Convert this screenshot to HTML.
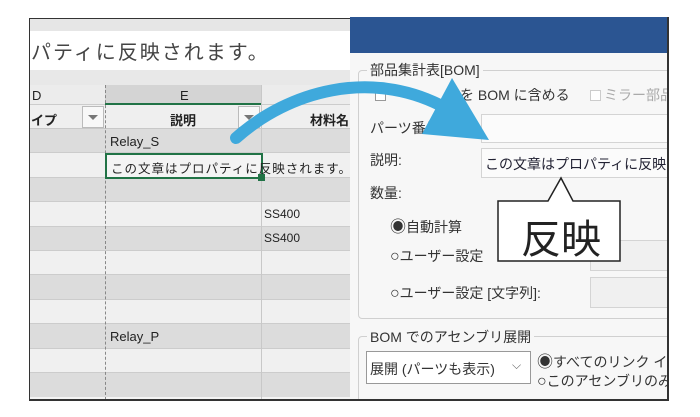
<!DOCTYPE html>
<html><head><meta charset="utf-8"><style>
*{margin:0;padding:0;box-sizing:border-box}
body{width:700px;height:417px;background:#fff;position:relative;overflow:hidden;font-family:"Liberation Sans","Noto Sans CJK JP",sans-serif;color:#222}
.a{position:absolute}
.t{font-size:13px;white-space:nowrap}
#dlg{position:absolute;left:350px;top:17px;width:318px;height:383px;overflow:hidden;background:#f7f7f7}
#dlg .a{margin-left:-350px;margin-top:-17px}
</style></head><body>
<!-- frame -->
<div class="a" style="left:29px;top:18px;width:640px;height:383px;border:1.5px solid #333;background:#f4f4f4"></div>
<!-- excel -->
<div class="a" style="left:30px;top:19px;width:320px;height:12px;background:#e6e6e6"></div>
<div class="a" style="left:30px;top:31px;width:320px;height:39px;background:#fff"></div>
<div class="a t" style="left:31px;top:36px;font-size:20px;color:#444;letter-spacing:2px">パティに反映されます。</div>
<div class="a" style="left:30px;top:70px;width:320px;height:15px;background:#e8e8e8"></div>
<div class="a" style="left:30px;top:85px;width:320px;height:20px;background:#ececec;border-bottom:1px solid #ccc"></div>
<div class="a" style="left:105px;top:85px;width:156px;height:20px;background:#d4d4d4;border-bottom:2px solid #217346"></div>
<div class="a t" style="left:32px;top:88px">D</div>
<div class="a t" style="left:180px;top:88px">E</div>
<div class="a" style="left:30px;top:105px;width:320px;height:24px;background:#efefef;border-bottom:1px solid #c8c8c8"></div>
<div class="a t" style="left:31px;top:110px;font-weight:bold">イプ</div>
<div class="a" style="left:82px;top:106px;width:22px;height:22px;border:1px solid #bbb;background:#f8f8f8"></div>
<div class="a" style="left:88px;top:115px;border:5px solid transparent;border-top:5px solid #777"></div>
<div class="a t" style="left:170px;top:110px;font-weight:bold">説明</div>
<div class="a" style="left:238px;top:106px;width:22px;height:22px;border:1px solid #bbb;background:#f8f8f8"></div>
<div class="a" style="left:244px;top:115px;border:5px solid transparent;border-top:5px solid #777"></div>
<div class="a t" style="left:310px;top:110px;font-weight:bold">材料名</div>
<!-- rows -->
<div class="a" style="left:30px;top:129px;width:320px">
<div style="height:24.4px;background:#dcdcdc;border-bottom:1px solid #ccc"></div>
<div style="height:24.4px;background:#f0f0f0;border-bottom:1px solid #ccc"></div>
<div style="height:24.4px;background:#dcdcdc;border-bottom:1px solid #ccc"></div>
<div style="height:24.4px;background:#f0f0f0;border-bottom:1px solid #ccc"></div>
<div style="height:24.4px;background:#dcdcdc;border-bottom:1px solid #ccc"></div>
<div style="height:24.4px;background:#f0f0f0;border-bottom:1px solid #ccc"></div>
<div style="height:24.4px;background:#dcdcdc;border-bottom:1px solid #ccc"></div>
<div style="height:24.4px;background:#f0f0f0;border-bottom:1px solid #ccc"></div>
<div style="height:24.4px;background:#dcdcdc;border-bottom:1px solid #ccc"></div>
<div style="height:24.4px;background:#f0f0f0;border-bottom:1px solid #ccc"></div>
<div style="height:24.4px;background:#dcdcdc"></div>
</div>
<div class="a" style="left:105px;top:85px;height:315px;border-left:1px dashed #888"></div>
<div class="a" style="left:261px;top:85px;height:315px;border-left:1px solid #c8c8c8"></div>
<div class="a t" style="left:110px;top:134px">Relay_S</div>
<div class="a" style="left:105px;top:153px;width:158px;height:26px;border:2px solid #217346;background:#f4f4f4"></div>
<div class="a" style="left:258px;top:174px;width:7px;height:7px;background:#217346"></div>
<div class="a t" style="left:111px;top:158px;font-size:12.5px;letter-spacing:1px">この文章はプロパティに反映されます。</div>
<div class="a t" style="left:264px;top:207px;font-size:12px">SS400</div>
<div class="a t" style="left:264px;top:231px;font-size:12px">SS400</div>
<div class="a t" style="left:110px;top:329px">Relay_P</div>
<!-- dialog -->
<div id="dlg">
<div class="a" style="left:350px;top:17px;width:318px;height:36px;background:#2b5592"></div>
<div class="a" style="left:358px;top:70px;width:320px;height:249px;border:1px solid #d0d0d0;border-radius:4px"></div>
<div class="a t" style="left:367px;top:60px;background:#f7f7f7;padding:0 3px;font-size:14px;color:#333">部品集計表[BOM]</div>
<div class="a" style="left:375px;top:90px;width:11px;height:11px;border:1px solid #999;background:#fff"></div>
<div class="a t" style="left:460px;top:85px;font-size:14px;color:#333">を BOM に含める</div>
<div class="a" style="left:590px;top:90px;width:11px;height:11px;border:1px solid #ccc;background:#fff"></div>
<div class="a t" style="left:604px;top:85px;font-size:14px;color:#aaa">ミラー部品</div>
<div class="a t" style="left:370px;top:118px;font-size:14px;color:#333">パーツ番号:</div>
<div class="a" style="left:481px;top:114px;width:190px;height:29px;border:1px solid #d4d4d4;background:#fbfbfb"></div>
<div class="a t" style="left:370px;top:150px;font-size:14px;color:#333">説明:</div>
<div class="a" style="left:481px;top:148px;width:190px;height:30px;border:1px solid #d4d4d4;background:#fbfbfb"></div>
<div class="a t" style="left:485px;top:154px;font-size:14px;color:#223">この文章はプロパティに反映さ</div>
<div class="a t" style="left:370px;top:183px;font-size:14px;color:#333">数量:</div>
<div class="a t" style="left:390px;top:213px;font-size:14px;color:#333"><span style="font-size:16px">◉</span>自動計算</div>
<div class="a t" style="left:390px;top:246px;font-size:14px;color:#333"><span style="font-size:16px">○</span>ユーザー設定</div>
<div class="a t" style="left:390px;top:283px;font-size:14px;color:#333"><span style="font-size:16px">○</span>ユーザー設定 [文字列]:</div>
<div class="a" style="left:590px;top:240px;width:80px;height:31px;border:1px solid #d4d4d4;background:#f0f0f0"></div>
<div class="a" style="left:590px;top:277px;width:80px;height:31px;border:1px solid #d4d4d4;background:#f0f0f0"></div>
<div class="a" style="left:358px;top:336px;width:320px;height:80px;border:1px solid #d0d0d0;border-radius:4px"></div>
<div class="a t" style="left:367px;top:327px;background:#f7f7f7;padding:0 3px;font-size:14px;color:#333">BOM でのアセンブリ展開</div>
<div class="a" style="left:366px;top:351px;width:165px;height:33px;border:1px solid #999;background:#fff"></div>
<div class="a t" style="left:370px;top:359px;font-size:14px;color:#333">展開 (パーツも表示)</div>
<div class="a t" style="left:512px;top:358px;font-size:12px;color:#666">⌵</div>
<div class="a t" style="left:537px;top:348px;font-size:14px;color:#333"><span style="font-size:16px">◉</span>すべてのリンク イン</div>
<div class="a t" style="left:537px;top:371px;font-size:14px;color:#333"><span style="font-size:16px">○</span>このアセンブリのみ</div>
</div>
<div class="a" style="left:667px;top:17px;width:2px;height:384px;background:#333"></div>
<div class="a" style="left:29px;top:399px;width:640px;height:2px;background:#333"></div>
<!-- callout -->
<svg class="a" style="left:0;top:0" width="700" height="417">
<polygon points="498,201 548,201 561,178 573,201 620,201 620,261 498,261" fill="#fff" stroke="#222" stroke-width="1.5"/>
<path d="M236,138 C290,90 370,70 440,105" fill="none" stroke="#3fa9dc" stroke-width="12" stroke-linecap="round"/>
<polygon points="452,78 489,140 422,134" fill="#3fa9dc"/>
</svg>
<div class="a t" style="left:521px;top:207px;font-size:40px;color:#222">反映</div>
</body></html>
